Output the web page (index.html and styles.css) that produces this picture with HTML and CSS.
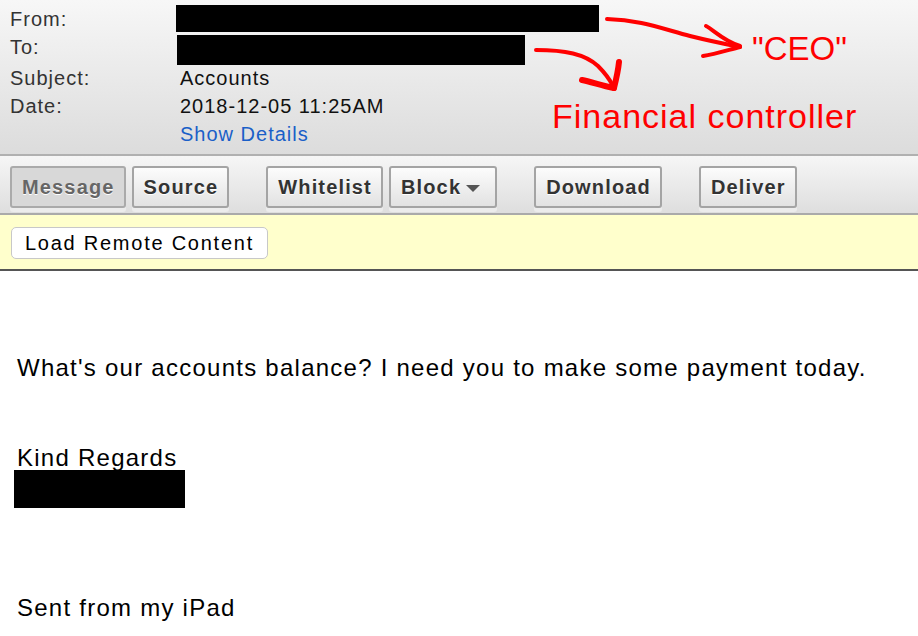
FILE: index.html
```html
<!DOCTYPE html>
<html lang="en">
<head>
    <meta charset="UTF-8">
    <title>Message - Accounts</title>
    <link rel="stylesheet" href="styles.css">
</head>
<body>
    <div class="headers">
        <div class="row row-from">
            <span class="label">From:</span>
            <span class="value"><span class="redact redact-from"></span></span>
        </div>
        <div class="row row-to">
            <span class="label">To:</span>
            <span class="value"><span class="redact redact-to"></span></span>
        </div>
        <div class="row">
            <span class="label">Subject:</span>
            <span class="value">Accounts</span>
        </div>
        <div class="row">
            <span class="label">Date:</span>
            <span class="value">2018-12-05 11:25AM</span>
        </div>
        <div class="row">
            <span class="label"></span>
            <a class="value details" href="#">Show Details</a>
        </div>

        <svg class="notes" width="918" height="154" viewBox="0 0 918 154">
            <g fill="none" stroke="#ff0000" stroke-linecap="round" stroke-linejoin="round">
                <path d="M607 19 C640 20 660 28 690 36 C710 41 725 44 740 47" stroke-width="4"/>
                <path d="M706 26 C714 30 722 40 740 46" stroke-width="4"/>
                <path d="M703 56 C715 54 728 50 740 47" stroke-width="4"/>
                <path d="M536 50 C565 50 585 54 598 66 C606 74 610 80 613 86" stroke-width="4"/>
                <path d="M619 62 C618 72 616 80 614 88" stroke-width="6"/>
                <path d="M582 80 C592 82 602 86 614 88" stroke-width="6"/>
            </g>
        </svg>
        <span class="note note-ceo">"CEO"</span>
        <span class="note note-fc">Financial controller</span>
    </div>

    <div class="toolbar">
        <div class="group">
            <button class="btn active">Message</button>
            <button class="btn">Source</button>
        </div>
        <div class="group">
            <button class="btn">Whitelist</button>
            <button class="btn btn-menu">Block<span class="caret"></span></button>
        </div>
        <div class="group">
            <button class="btn">Download</button>
        </div>
        <div class="group">
            <button class="btn">Deliver</button>
        </div>
    </div>

    <div class="remote">
        <button class="load">Load Remote Content</button>
    </div>

    <div class="message">
        <p class="line first">What's our accounts balance? I need you to make some payment today.</p>
        <p class="line regards">Kind Regards</p>
        <div class="redact redact-sig"></div>
        <p class="line sent">Sent from my iPad</p>
    </div>
</body>
</html>
```

FILE: styles.css
```css
body {
    margin: 0;
    padding: 0;
    font-family: "Liberation Sans", Arial, sans-serif;
    background-color: #fff;
    color: #000;
    width: 918px;
    overflow: hidden;
}

.headers {
    position: relative;
    height: 142px;
    padding-top: 6px;
    padding-bottom: 6px;
    background: linear-gradient(#f7f7f7, #dcdcdc);
    border-bottom: 2px solid #b0b0b0;
}
.row {
    display: flex;
    height: 28px;
    line-height: 28px;
    font-size: 20px;
    letter-spacing: 1px;
}
.row-from {
    height: 27px;
    line-height: 27px;
}
.row-to {
    height: 31px;
}
.label {
    width: 170px;
    padding-left: 10px;
    color: #333;
}
.value {
    color: #111;
}
.details {
    color: #1a5fc8;
    text-decoration: none;
}
.redact {
    display: block;
    background-color: #000;
}
.redact-from {
    width: 423px;
    height: 27px;
    margin-left: -4px;
    margin-top: -1px;
}
.redact-to {
    width: 348px;
    height: 30px;
    margin-left: -3px;
    margin-top: 2px;
}

.notes {
    position: absolute;
    left: 0;
    top: 0;
}
.note {
    position: absolute;
    color: #ff0000;
    font-family: "Liberation Sans", "Noto Sans CJK JP", sans-serif;
    white-space: nowrap;
}
.note-ceo {
    left: 752px;
    top: 30px;
    font-size: 33px;
}
.note-fc {
    left: 552px;
    top: 97px;
    font-size: 34px;
    letter-spacing: 1px;
}

.toolbar {
    display: flex;
    gap: 37px;
    height: 59px;
    padding-top: 10px;
    padding-left: 10px;
    box-sizing: border-box;
    background: linear-gradient(#f6f6f6, #dedede);
    border-bottom: 2px solid #aaa;
}
.group {
    display: flex;
    gap: 6px;
}
.btn {
    height: 42px;
    padding: 0 9px 0 10px;
    font-family: "Liberation Sans", Arial, sans-serif;
    font-size: 20px;
    font-weight: bold;
    letter-spacing: 1.15px;
    color: #333;
    background: linear-gradient(#fcfcfc, #e2e2e2);
    border: 2px solid #a4a4a4;
    border-radius: 3px;
    box-shadow: 0 4px 0 #ececec;
    text-shadow: 0 1px 0 #fff;
}
.btn.active {
    color: #666;
    background: #d8d8d8;
    border-color: #aaa;
}
.btn-menu {
    padding-right: 15px;
}
.caret {
    display: inline-block;
    width: 0;
    height: 0;
    margin-left: 5px;
    border-left: 7px solid transparent;
    border-right: 7px solid transparent;
    border-top: 7px solid #555;
    vertical-align: middle;
}

.remote {
    height: 56px;
    padding: 12px 0 0 11px;
    box-sizing: border-box;
    background-color: #ffffcc;
    border-bottom: 2px solid #555;
}
.load {
    height: 32px;
    padding: 0 13px;
    font-family: "Liberation Sans", Arial, sans-serif;
    font-size: 20px;
    letter-spacing: 1.75px;
    color: #000;
    background-color: #fff;
    border: 1px solid #c8c8c8;
    border-radius: 5px;
}

.message {
    padding: 83px 0 0 17px;
}
.line {
    margin: 0;
    font-size: 24px;
    line-height: 28px;
    letter-spacing: 1.25px;
}
.regards {
    margin-top: 62px;
}
.redact-sig {
    width: 171px;
    height: 38px;
    margin-left: -3px;
    margin-top: -2px;
}
.sent {
    margin-top: 86px;
}
```
